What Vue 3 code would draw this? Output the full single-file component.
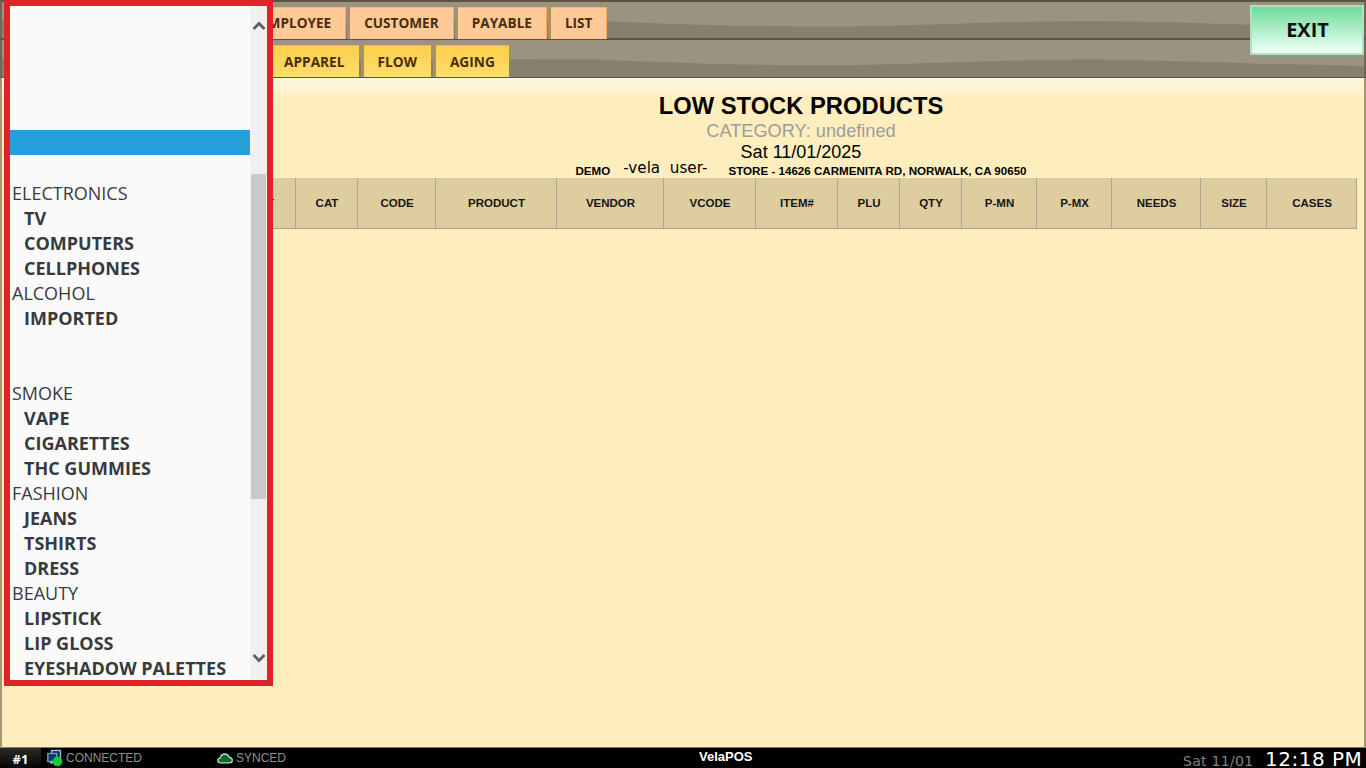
<script setup>
const topTabs = ['EMPLOYEE', 'CUSTOMER', 'PAYABLE', 'LIST']
const subTabs = ['APPAREL', 'FLOW', 'AGING']
const columns = [
  { label: 'T', width: 51 }, { label: 'CAT', width: 62 }, { label: 'CODE', width: 78 },
  { label: 'PRODUCT', width: 121 }, { label: 'VENDOR', width: 107 }, { label: 'VCODE', width: 92 },
  { label: 'ITEM#', width: 82 }, { label: 'PLU', width: 62 }, { label: 'QTY', width: 62 },
  { label: 'P-MN', width: 75 }, { label: 'P-MX', width: 75 }, { label: 'NEEDS', width: 89 },
  { label: 'SIZE', width: 66 }, { label: 'CASES', width: 90 }
]
const gridColumns = columns.map(c => c.width + 'px').join(' ')
const rows = [
  { kind: 'empty' }, { kind: 'empty' }, { kind: 'empty' }, { kind: 'empty' }, { kind: 'empty' },
  { kind: 'active' }, { kind: 'empty' },
  { kind: 'group', text: 'ELECTRONICS' }, { kind: 'item', text: 'TV' }, { kind: 'item', text: 'COMPUTERS' },
  { kind: 'item', text: 'CELLPHONES' }, { kind: 'group', text: 'ALCOHOL' }, { kind: 'item', text: 'IMPORTED' },
  { kind: 'empty' }, { kind: 'empty' },
  { kind: 'group', text: 'SMOKE' }, { kind: 'item', text: 'VAPE' }, { kind: 'item', text: 'CIGARETTES' },
  { kind: 'item', text: 'THC GUMMIES' }, { kind: 'group', text: 'FASHION' }, { kind: 'item', text: 'JEANS' },
  { kind: 'item', text: 'TSHIRTS' }, { kind: 'item', text: 'DRESS' }, { kind: 'group', text: 'BEAUTY' },
  { kind: 'item', text: 'LIPSTICK' }, { kind: 'item', text: 'LIP GLOSS' }, { kind: 'item', text: 'EYESHADOW PALETTES' }
]
const wave = 'M0 20 L600 21 C680 25 760 28 860 27 C950 25 1020 21 1100 21 C1180 22 1250 26 1366 28 L1366 40 L0 40Z'
</script>

<template>
  <div class="app">
    <header class="head">
      <div class="bar bar-top">
        <svg class="wave" viewBox="0 0 1366 40" preserveAspectRatio="none"><path :d="wave" fill="#86806e" /></svg>
        <div class="tabs tabs-top">
          <button v-for="t in topTabs" :key="t" class="tab tab-orange">{{ t }}</button>
        </div>
      </div>
      <div class="bar bar-sub">
        <svg class="wave" viewBox="0 0 1366 40" preserveAspectRatio="none"><path :d="wave" fill="#86806e" /></svg>
        <div class="tabs tabs-sub">
          <button v-for="t in subTabs" :key="t" class="tab tab-yellow">{{ t }}</button>
        </div>
      </div>
      <button class="exit">EXIT</button>
    </header>

    <main class="main">
      <section class="report">
        <h1 class="title">LOW STOCK PRODUCTS</h1>
        <div class="category">CATEGORY: undefined</div>
        <div class="date">Sat 11/01/2025</div>
        <div class="info">
          <span class="info-bold">DEMO</span>
          <span class="user">-vela&nbsp; user-</span>
          <span class="info-bold">STORE - 14626 CARMENITA RD, NORWALK, CA 90650</span>
        </div>
        <div class="thead" :style="{ gridTemplateColumns: gridColumns }">
          <div v-for="c in columns" :key="c.label" class="th">{{ c.label }}</div>
        </div>
      </section>
    </main>

    <footer class="foot">
      <div class="badge">#1</div>
      <div class="status status-conn">
        <svg class="ico" width="16" height="18" viewBox="0 0 16 18">
          <rect x="4.5" y="1.5" width="9" height="8" fill="#0d2b44" stroke="#8fc4e6" stroke-width="1.4" />
          <rect x="0.8" y="4.5" width="9" height="8" fill="#123a5c" stroke="#5aa0d2" stroke-width="1.4" />
          <rect x="3" y="12.5" width="5" height="2" fill="#8fc4e6" />
          <circle cx="10.5" cy="12.5" r="4.8" fill="#17c83a" />
        </svg>
        <span>CONNECTED</span>
      </div>
      <div class="status status-sync">
        <svg class="ico" width="16" height="11" viewBox="0 0 16 11">
          <path d="M3.6 9.8 C1.8 9.8 .8 8.8 .8 7.4 C.8 6 1.9 5.2 3.2 5.1 C3.7 2.6 5.6 1 7.8 1 C9.9 1 11.5 2.3 12.2 4.3 C14 4.4 15.3 5.6 15.3 7.2 C15.3 8.8 14.2 9.8 12.5 9.8Z" fill="#0d6b2c" stroke="#b9d9c4" stroke-width="1.3" />
        </svg>
        <span>SYNCED</span>
      </div>
      <div class="brand">VelaPOS</div>
      <div class="fdate">Sat 11/01</div>
      <div class="ftime">12:18 PM</div>
    </footer>

    <aside class="panel">
      <div class="list">
        <div v-for="(r, i) in rows" :key="i" class="row" :class="r.kind">{{ r.text }}</div>
      </div>
      <div class="scroll">
        <div class="thumb"></div>
        <svg class="chev chev-up" width="14" height="10" viewBox="0 0 14 10"><path d="M1.5 8 L7 2.5 L12.5 8" fill="none" stroke="#5f5f5f" stroke-width="2.8" /></svg>
        <svg class="chev chev-down" width="14" height="10" viewBox="0 0 14 10"><path d="M1.5 2 L7 7.5 L12.5 2" fill="none" stroke="#5f5f5f" stroke-width="2.8" /></svg>
      </div>
    </aside>
  </div>
</template>

<style scoped>
.app {
  position: relative;
  width: 1366px;
  height: 768px;
  overflow: hidden;
  display: flex;
  flex-direction: column;
  background: #ffeebd;
  font-family: "Liberation Sans", Arial, sans-serif;
}
.head {
  position: relative;
  flex: none;
}
.bar {
  position: relative;
  height: 39px;
  background: #9b9380;
  box-sizing: border-box;
  border-left: 2px solid #6f6857;
  border-right: 2px solid #6f6857;
}
.bar-top {
  height: 40px;
  border-top: 2px solid #5a5442;
  border-bottom: 2px solid #5a5442;
}
.bar-sub {
  height: 38px;
  border-bottom: 1px solid #5a5442;
}
.wave {
  position: absolute;
  inset: 0;
  width: 100%;
  height: 100%;
}
.tabs {
  position: relative;
  display: flex;
  gap: 5px;
  height: 100%;
  align-items: flex-end;
  box-sizing: border-box;
}
.tabs-top {
  padding-left: 244px;
  gap: 4px;
}
.tabs-sub {
  padding-left: 268px;
}
.tab {
  border: 0;
  margin: 0;
  padding: 0 14px 2px;
  font-family: "Open Sans", sans-serif;
  font-weight: 700;
  font-size: 13.6px;
  color: #4a2d0e;
  box-sizing: border-box;
}
.tab-orange {
  height: 32px;
  margin-bottom: -1px;
  background: #ffc998;
  border-top: 1px solid #f2b777;
  border-right: 1px solid #f0ad5c;
  box-shadow: -3px 0 0 #a8905f;
}
.tab-yellow {
  height: 32px;
  padding-bottom: 0;
  font-size: 13.7px;
  background: linear-gradient(#ffd04c, #ffdc6c);
  border-top: 1px solid #f0bd45;
  box-shadow: -3px 0 0 #a8905f;
}
.exit {
  position: absolute;
  top: 5px;
  right: 2px;
  width: 114px;
  height: 50px;
  box-sizing: border-box;
  border: 2px solid #a9e3c2;
  background: linear-gradient(#6fdc9b, #f2fff9);
  font-family: "Open Sans", sans-serif;
  font-weight: 700;
  font-size: 20px;
  color: #111;
  padding: 0 0 2px 1px;
}
.main {
  flex: 1;
  min-height: 0;
  box-sizing: border-box;
  border-left: 2px solid #a59675;
  border-right: 2px solid #a59675;
  border-bottom: 1px solid #8a7b55;
  background: linear-gradient(#fff8e3 0, #ffeebd 22px);
}
.report {
  margin-left: 243px;
  width: 1112px;
  display: flex;
  flex-direction: column;
  align-items: center;
  padding-top: 14px;
}
.title {
  margin: 0;
  font-size: 23.75px;
  line-height: 28px;
  font-weight: 700;
  color: #000;
}
.category {
  font-size: 18.2px;
  line-height: 22px;
  color: #9c9c9c;
}
.date {
  font-size: 18px;
  line-height: 21px;
  color: #000;
}
.info {
  display: flex;
  align-items: baseline;
  height: 14px;
  gap: 13px;
  line-height: 14px;
  color: #000;
}
.info-bold {
  font-size: 11.6px;
  font-weight: 700;
}
.user {
  font-family: "DejaVu Sans", sans-serif;
  font-size: 15.2px;
  margin-right: 8px;
  position: relative;
  top: -2px;
}
.thead {
  display: grid;
  width: 1112px;
  height: 52px;
  box-sizing: border-box;
  border-top: 1px solid #fff5d8;
  border-bottom: 1px solid #a9a391;
  background: #ddcd9f;
}
.th {
  display: flex;
  align-items: center;
  justify-content: center;
  box-sizing: border-box;
  border-right: 1px solid #aca795;
  padding-left: 1px;
  font-size: 11.5px;
  font-weight: 700;
  color: #161616;
}
.foot {
  flex: none;
  height: 20px;
  display: flex;
  align-items: center;
  background: #000;
  color: #8f8f8f;
  font-size: 12px;
}
.badge {
  width: 41px;
  height: 20px;
  box-sizing: border-box;
  line-height: 22px;
  text-align: center;
  background: linear-gradient(#2a2a2a, #050505);
  color: #fff;
  font-family: "Open Sans", sans-serif;
  font-weight: 700;
  font-size: 13px;
}
.status {
  display: flex;
  align-items: center;
  gap: 3px;
  flex: none;
}
.status-conn {
  margin-left: 6px;
  width: 170px;
}
.status-sync {
  width: 482px;
}
.ico {
  flex: none;
}
.brand {
  width: 155px;
  flex: none;
  color: #fff;
  font-weight: 700;
  font-size: 13px;
  margin-top: -3px;
}
.fdate {
  flex: none;
  margin-left: 329px;
  width: 82px;
  font-family: "DejaVu Sans", sans-serif;
  font-size: 14px;
  line-height: 14px;
  letter-spacing: 0.3px;
  color: #828282;
  margin-top: 6px;
  white-space: nowrap;
}
.ftime {
  flex: none;
  font-family: "DejaVu Sans", sans-serif;
  font-size: 20px;
  line-height: 18px;
  color: #fff;
  letter-spacing: 0.5px;
  white-space: nowrap;
  margin-top: 2px;
}
.panel {
  position: absolute;
  left: 4px;
  top: 0;
  width: 269px;
  height: 686px;
  box-sizing: border-box;
  border: 6px solid #e0232b;
  background: #fafafa;
  display: flex;
}
.list {
  flex: 1;
  margin-top: -1px;
  font-family: "Open Sans", sans-serif;
  font-size: 18px;
  color: #373a3f;
  overflow: hidden;
}
.row {
  height: 25px;
  line-height: 27px;
  white-space: nowrap;
}
.row.active {
  background: #269fdb;
}
.row.group {
  padding-left: 2px;
}
.row.item {
  padding-left: 14px;
  font-weight: 700;
}
.scroll {
  position: relative;
  width: 17px;
  flex: none;
  background: #f0f0f0;
}
.thumb {
  margin: 168px 0 0 1px;
  width: 15px;
  height: 325px;
  background: #c9c9c9;
}
.chev {
  position: absolute;
  left: 2px;
}
.chev-up {
  top: 15px;
}
.chev-down {
  bottom: 17px;
}
</style>
